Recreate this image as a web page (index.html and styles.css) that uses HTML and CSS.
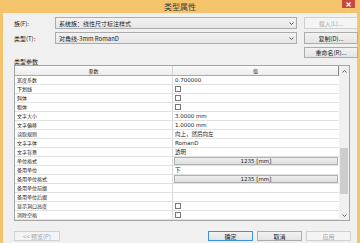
FILE: index.html
```html
<!DOCTYPE html>
<html lang="zh-CN">
  <head>
    <meta charset="UTF-8" />
    <meta name="viewport" content="width=device-width, initial-scale=1.0" />
    <title>类型属性</title>
    <link rel="stylesheet" href="styles.css">
  </head>
  <body>
    <div class="window">
      <header class="titlebar">
        <span class="title">类型属性</span>
        <span class="close">
          <svg width="5" height="5" viewBox="0 0 5 5"><path d="M0.5 0.5 L4.5 4.5 M4.5 0.5 L0.5 4.5" stroke="#fff" stroke-width="1.1"/></svg>
        </span>
      </header>

      <main class="client">
        <section class="type-form">
          <label>族(F):</label>
          <div class="select">
            <span>系统族：线性尺寸标注样式</span>
            <svg width="5" height="3" viewBox="0 0 5 3"><path d="M0.5 0.5 L2.5 2.5 L4.5 0.5" fill="none" stroke="#444" stroke-width="0.9"/></svg>
          </div>
          <button class="btn" disabled>载入(L)...</button>

          <label>类型(T):</label>
          <div class="select">
            <span>对角线-3mm RomanD</span>
            <svg width="5" height="3" viewBox="0 0 5 3"><path d="M0.5 0.5 L2.5 2.5 L4.5 0.5" fill="none" stroke="#444" stroke-width="0.9"/></svg>
          </div>
          <button class="btn">复制(D)...</button>

          <button class="btn rename">重命名(R)...</button>
        </section>

        <h2 class="group-title">类型参数</h2>

        <div class="params">
          <div class="grid">
            <div class="th">参数</div>
            <div class="th th-value">值</div>

            <div class="name">宽度系数</div><div class="val">0.700000</div>
            <div class="name">下划线</div><div class="val"><span class="check"></span></div>
            <div class="name">斜体</div><div class="val"><span class="check"></span></div>
            <div class="name">粗体</div><div class="val"><span class="check"></span></div>
            <div class="name">文字大小</div><div class="val">3.0000 mm</div>
            <div class="name">文字偏移</div><div class="val">1.0000 mm</div>
            <div class="name">读取规则</div><div class="val">向上，然后向左</div>
            <div class="name">文字字体</div><div class="val">RomanD</div>
            <div class="name">文字背景</div><div class="val">透明</div>
            <div class="name">单位格式</div><div class="val val-btn"><span class="cell-btn">1235 [mm]</span></div>
            <div class="name">备用单位</div><div class="val">下</div>
            <div class="name">备用单位格式</div><div class="val val-btn"><span class="cell-btn">1235 [mm]</span></div>
            <div class="name">备用单位前缀</div><div class="val"></div>
            <div class="name">备用单位后缀</div><div class="val"></div>
            <div class="name">显示洞口高度</div><div class="val"><span class="check"></span></div>
            <div class="name">消除空格</div><div class="val"><span class="check"></span></div>
          </div>

          <div class="scrollbar">
            <span class="arrow">
              <svg width="5" height="3" viewBox="0 0 5 3"><path d="M0.5 2.5 L2.5 0.5 L4.5 2.5" fill="none" stroke="#555" stroke-width="0.9"/></svg>
            </span>
            <div class="track"><div class="thumb"></div></div>
            <span class="arrow">
              <svg width="5" height="3" viewBox="0 0 5 3"><path d="M0.5 0.5 L2.5 2.5 L4.5 0.5" fill="none" stroke="#555" stroke-width="0.9"/></svg>
            </span>
          </div>
        </div>

        <footer class="actions">
          <button class="btn preview" disabled>&lt;&lt; 预览(P)</button>
          <button class="btn default">确定</button>
          <button class="btn">取消</button>
          <button class="btn" disabled>应用</button>
        </footer>
      </main>
    </div>
  </body>
</html>
```

FILE: styles.css
```css
html {
  box-sizing: border-box;
  font-family: "Noto Sans CJK SC", sans-serif;
  font-size: 6px;
  color: #222;
}

*,
*:before,
*:after {
  box-sizing: inherit;
}

body {
  margin: 0;
  width: 360px;
  height: 243px;
  overflow: hidden;
  background-color: #f3c46c;
}

.window {
  display: flex;
  flex-direction: column;
  height: 243px;
  padding: 0 3px;
  background-color: #f3c46c;
}

/* title bar */
.titlebar {
  display: grid;
  grid-template-columns: 1fr auto 1fr;
  height: 13px;
  margin: 0 -3px;
}

.title {
  grid-column: 2;
  font-size: 8px;
  line-height: 13px;
  color: #3a3a3a;
}

.close {
  grid-column: 3;
  justify-self: end;
  display: flex;
  align-items: center;
  justify-content: center;
  width: 13px;
  height: 8px;
  margin-right: 5px;
  background-color: #c9463d;
}

/* client area */
.client {
  flex-grow: 1;
  padding: 4px 6px 0 11px;
  background-color: #f0f0f0;
}

.type-form {
  display: grid;
  grid-template-columns: 34px 242px 54px;
  grid-template-rows: 12px 12px 11px;
  column-gap: 7px;
  row-gap: 3px;
  align-items: center;
}

.type-form label {
  font-size: 6px;
}

.select {
  display: flex;
  justify-content: space-between;
  align-items: center;
  height: 12px;
  padding: 0 2px 0 3px;
  border: 1px solid #acacac;
  background: linear-gradient(#f2f2f2, #e6e6e6);
  font-size: 6px;
}

.btn {
  height: 12px;
  padding: 0;
  border: 1px solid #acacac;
  background: linear-gradient(#f2f2f2, #e4e4e4);
  font-family: inherit;
  font-size: 6px;
  color: #222;
}

.btn:disabled {
  color: #a6a6a6;
  border-color: #d0d0d0;
  background: #f4f4f4;
}

.rename {
  grid-column: 3;
  height: 11px;
}

.group-title {
  margin: 0;
  height: 7px;
  font-size: 6px;
  font-weight: normal;
  line-height: 7px;
}

/* parameters table */
.params {
  display: flex;
  width: 336px;
  border: 1px solid #a5a5a5;
  background-color: #fff;
}

.grid {
  display: grid;
  grid-template-columns: 158px 166px;
  grid-auto-rows: 9px;
  grid-template-rows: 10px;
  font-family: "DejaVu Sans", "Noto Sans CJK SC", sans-serif;
  font-size: 5.5px;
}

.th {
  display: flex;
  align-items: center;
  justify-content: center;
  border-right: 1px solid #d5d5d5;
  border-bottom: 1px solid #a9a9a9;
  background: linear-gradient(#fbfbfb, #ececec);
  font-family: "Noto Sans CJK SC", sans-serif;
  font-size: 5px;
}

.th-value {
  border-right: 1px solid #8a8a8a;
}

.name,
.val {
  display: flex;
  align-items: center;
  padding-left: 2px;
  border-bottom: 1px solid #e2e2e2;
  line-height: 8px;
  white-space: nowrap;
}

.name {
  border-right: 1px solid #d9d9d9;
  font-family: "Noto Sans CJK SC", sans-serif;
  font-size: 5px;
}

.val-btn {
  padding: 0 1px 0 1px;
}

.cell-btn {
  display: flex;
  align-items: center;
  justify-content: center;
  width: 100%;
  height: 8px;
  border: 1px solid #b0b0b0;
  background: linear-gradient(#efefef, #e0e0e0);
}

.check {
  display: inline-block;
  width: 6px;
  height: 6px;
  border: 1px solid #777;
  background-color: #fff;
}

/* scrollbar */
.scrollbar {
  display: flex;
  flex-direction: column;
  width: 10px;
  background-color: #f0f0f0;
}

.arrow {
  display: flex;
  align-items: center;
  justify-content: center;
  height: 10px;
}

.track {
  flex-grow: 1;
  padding-top: 72px;
}

.thumb {
  height: 46px;
  margin: 0 1px;
  background-color: #cdcdcd;
}

/* bottom buttons */
.actions {
  display: flex;
  gap: 4px;
  margin-top: 10px;
}

.actions .btn {
  width: 45px;
  height: 10px;
}

.actions .preview {
  width: 46px;
  margin-right: auto;
}

.actions .default {
  border-color: #3d8ee0;
}
```
